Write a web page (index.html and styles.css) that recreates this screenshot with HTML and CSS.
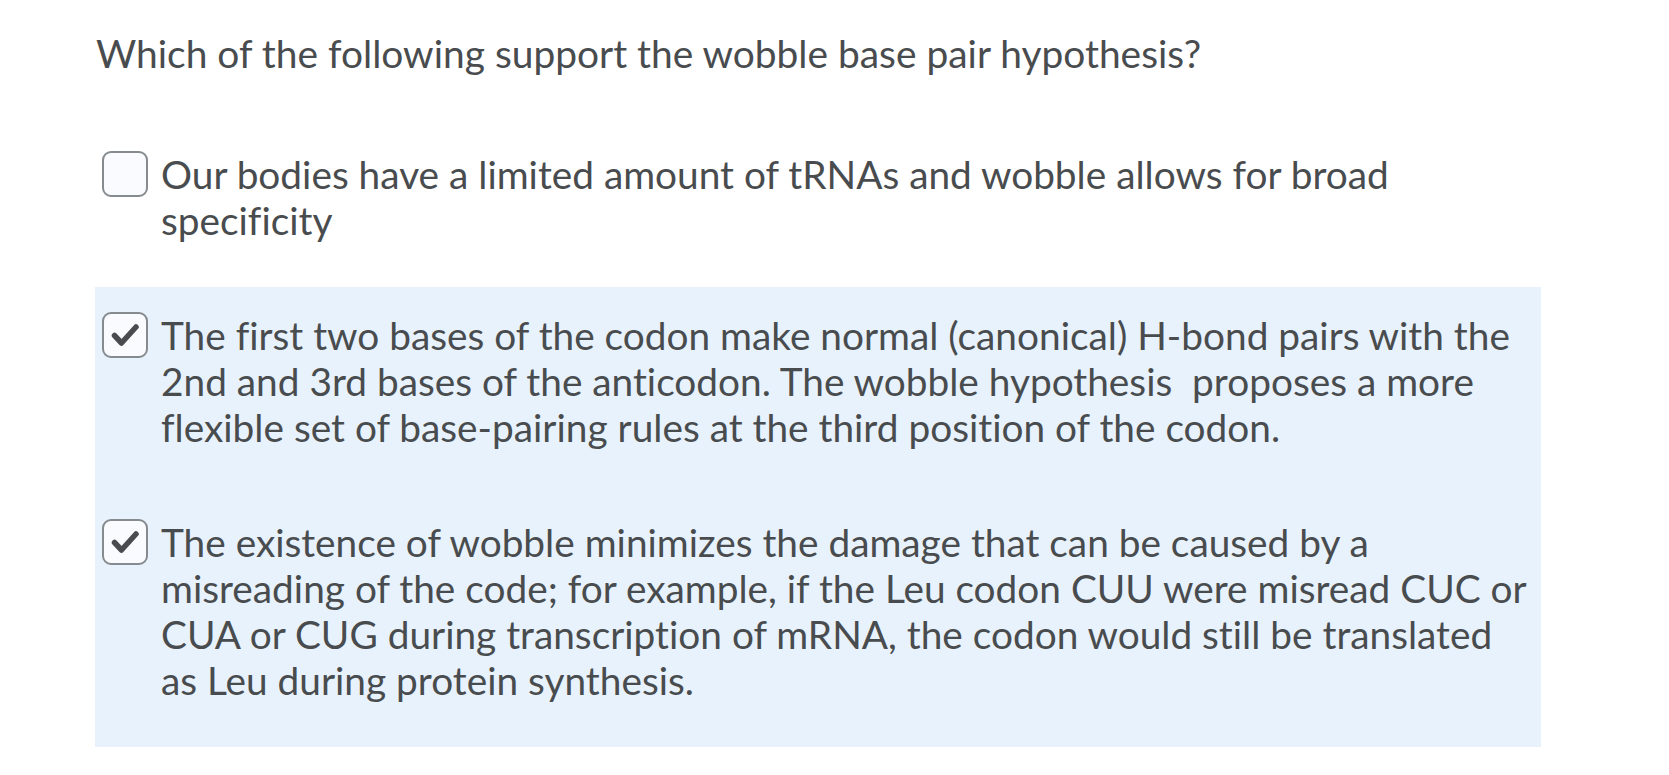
FILE: index.html
```html
<!DOCTYPE html>
<html>
<head>
<meta charset="utf-8">
<link rel="stylesheet" href="styles.css">
</head>
<body>
<div class="page">
  <h1 class="question">Which of the following support the wobble base pair hypothesis?</h1>
  <div class="options">
    <label class="option">
      <span class="box"></span>
      <span class="text">Our bodies have a limited amount of tRNAs and wobble allows for broad specificity</span>
    </label>
    <label class="option selected">
      <span class="box"><svg viewBox="0 0 46 46" width="46" height="46"><path d="M12.5 23.5 L19.5 31 L34 15" fill="none" stroke="#494c4e" stroke-width="5.5" stroke-linecap="round" stroke-linejoin="round"/></svg></span>
      <span class="text">The first two bases of the codon make normal (canonical) H-bond pairs with the 2nd and 3rd bases of the anticodon. The wobble hypothesis&nbsp; proposes a more flexible set of base-pairing rules at the third position of the codon.</span>
    </label>
    <label class="option selected">
      <span class="box"><svg viewBox="0 0 46 46" width="46" height="46"><path d="M12.5 23.5 L19.5 31 L34 15" fill="none" stroke="#494c4e" stroke-width="5.5" stroke-linecap="round" stroke-linejoin="round"/></svg></span>
      <span class="text">The existence of wobble minimizes the damage that can be caused by a misreading of the code; for example, if the Leu codon CUU were misread CUC or CUA or CUG during transcription of mRNA, the codon would still be translated as Leu during protein synthesis.</span>
    </label>
  </div>
</div>
</body>
</html>
```

FILE: styles.css
```css
html, body {
  margin: 0;
  padding: 0;
  background: #ffffff;
}
body {
  font-family: Lato, "Noto Sans", sans-serif;
  color: #494c4e;
  font-variant-ligatures: none;
}
.page {
  padding: 0 0 0 95px;
  width: 1446px;
}
.question {
  margin: 0;
  padding: 30px 0 0 1px;
  font-size: 38.9px;
  font-weight: 400;
  line-height: 46px;
  height: 126px;
  box-sizing: border-box;
}
.options {
  display: flex;
  flex-direction: column;
}
.option {
  display: flex;
  align-items: flex-start;
  gap: 13px;
  padding: 25px 10px 44px 7px;
  font-size: 38.8px;
  line-height: 46px;
}
.option.selected {
  background: #e8f2fc;
}
.box {
  flex: none;
  width: 46px;
  height: 46px;
  box-sizing: border-box;
  border: 2px solid #868b8f;
  border-radius: 9px;
  background: #f9fbff;
  display: flex;
  align-items: center;
  justify-content: center;
}
.box svg {
  display: block;
  margin: -2px;
}
.text {
  flex: 1;
}
```
